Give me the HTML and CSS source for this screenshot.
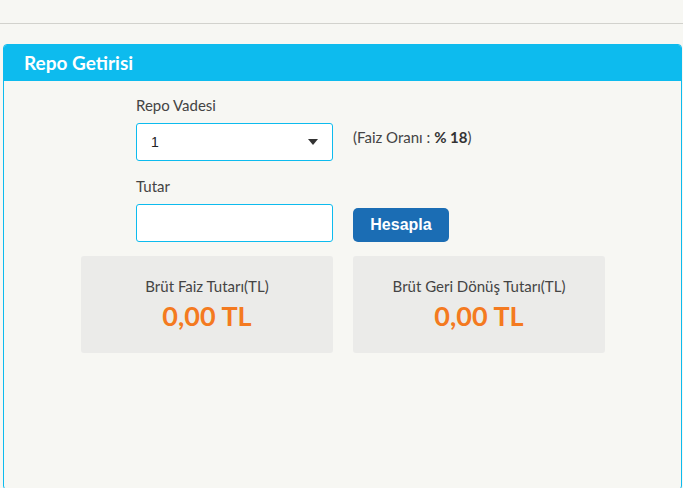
FILE: index.html
```html
<!DOCTYPE html>
<html lang="tr">
<head>
  <meta charset="UTF-8" />
  <meta name="viewport" content="width=device-width, initial-scale=1.0" />
  <title>Repo Getirisi</title>
  <link rel="stylesheet" href="styles.css">
</head>
<body>
  <div class="topbar"></div>

  <div class="panel">
    <div class="panel-head">Repo Getirisi</div>
    <div class="panel-body">
      <div class="calc">
        <div class="field">
          <label for="vade">Repo Vadesi</label>
          <div class="select">
            <select id="vade">
              <option>1</option>
              <option>7</option>
              <option>30</option>
            </select>
            <span class="caret"></span>
          </div>
        </div>
        <div class="note">(Faiz Oranı : <b>% 18</b>)</div>

        <div class="field field-second">
          <label for="tutar">Tutar</label>
          <input type="text" id="tutar">
        </div>
        <div class="action">
          <button onclick="hesapla()">Hesapla</button>
        </div>

        <div class="result">
          <span class="result-label">Brüt Faiz Tutarı(TL)</span>
          <span class="result-value" id="faiz">0,00 TL</span>
        </div>
        <div class="result">
          <span class="result-label">Brüt Geri Dönüş Tutarı(TL)</span>
          <span class="result-value" id="donus">0,00 TL</span>
        </div>
      </div>
    </div>
  </div>

  <script>
    function hesapla() {
      const tutar = parseFloat(document.getElementById("tutar").value.replace(",", "."));
      const gun = parseFloat(document.getElementById("vade").value);
      if (isNaN(tutar)) return;
      const faiz = tutar * 0.18 * gun / 365;
      document.getElementById("faiz").textContent = faiz.toFixed(2).replace(".", ",") + " TL";
      document.getElementById("donus").textContent = (tutar + faiz).toFixed(2).replace(".", ",") + " TL";
    }
  </script>
</body>
</html>
```

FILE: styles.css
```css
html, body {
  height: 100%;
}
body {
  margin: 0;
  background-color: #f7f7f3;
  color: #333;
  font-family: Lato, "Open Sans", sans-serif;
  overflow: hidden;
}
.topbar {
  height: 23px;
  border-bottom: 1px solid #d2d2cd;
}
.panel {
  margin: 20px 1px 0 3px;
  height: 446px;
  border: 1px solid #0dbbee;
  border-radius: 4px;
  box-sizing: border-box;
}
.panel-head {
  background-color: #0dbbee;
  color: #fff;
  font-weight: bold;
  font-size: 19px;
  height: 36px;
  line-height: 36px;
  padding-left: 20px;
  border-radius: 3px 3px 0 0;
}
.panel-body {
  padding: 14px 0 0 77px;
}
.calc {
  display: grid;
  grid-template-columns: 252px 252px;
  column-gap: 20px;
  align-items: start;
}
.field {
  margin-left: 55px;
}
.field-second {
  margin-top: 15px;
}
.field label {
  display: block;
  font-size: 15px;
  color: #444;
  line-height: 20px;
  margin-bottom: 8px;
}
.select {
  position: relative;
}
.select select, .field input {
  display: block;
  width: 197px;
  height: 38px;
  box-sizing: border-box;
  border: 1px solid #0dbbee;
  border-radius: 3px;
  background-color: #fff;
  font-family: "Liberation Sans", Arial, sans-serif;
  font-size: 14px;
  color: #222;
  padding: 0 14px;
  outline: none;
}
.select select {
  appearance: none;
  -webkit-appearance: none;
}
.caret {
  position: absolute;
  right: 15px;
  top: 16px;
  border-left: 5px solid transparent;
  border-right: 5px solid transparent;
  border-top: 6px solid #333;
}
.note {
  margin-top: 33px;
  font-size: 15px;
  line-height: 18px;
  color: #444;
}
.note b {
  color: #333;
}
.action {
  margin-top: 47px;
}
.action button {
  width: 96px;
  height: 34px;
  border: 0;
  border-radius: 5px;
  background-color: #1b6db4;
  color: #fff;
  font-family: "Liberation Sans", Arial, sans-serif;
  font-weight: bold;
  font-size: 16px;
  cursor: pointer;
}
.result {
  margin-top: 14px;
  height: 97px;
  background-color: #ebebe9;
  border-radius: 3px;
  display: flex;
  flex-direction: column;
  align-items: center;
  padding-top: 20px;
  box-sizing: border-box;
}
.result-label {
  font-size: 15px;
  color: #444;
  line-height: 20px;
}
.result-value {
  font-size: 27px;
  font-weight: bold;
  color: #f47a20;
  line-height: 40px;
}
```
